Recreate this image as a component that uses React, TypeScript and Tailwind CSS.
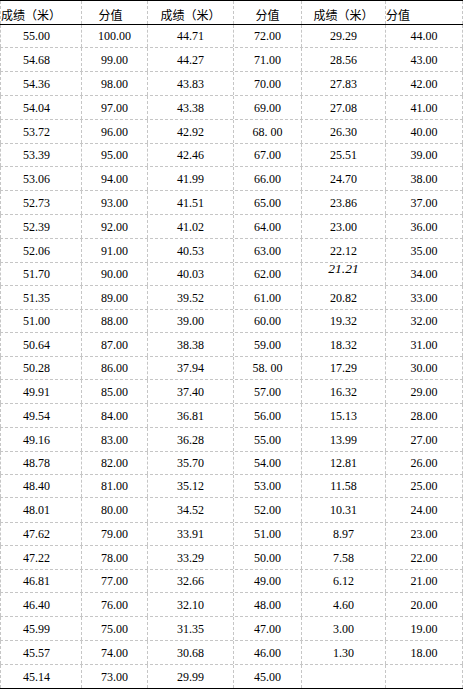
import React from "react";

const c1 = ["55.00","54.68","54.36","54.04","53.72","53.39","53.06","52.73","52.39","52.06","51.70","51.35","51.00","50.64","50.28","49.91","49.54","49.16","48.78","48.40","48.01","47.62","47.22","46.81","46.40","45.99","45.57","45.14"];
const c2 = Array.from({ length: 28 }, (_, i) => (100 - i).toFixed(2));
const c3 = ["44.71","44.27","43.83","43.38","42.92","42.46","41.99","41.51","41.02","40.53","40.03","39.52","39.00","38.38","37.94","37.40","36.81","36.28","35.70","35.12","34.52","33.91","33.29","32.66","32.10","31.35","30.68","29.99"];
const c4 = Array.from({ length: 28 }, (_, i) => {
  const v = 72 - i;
  if (v === 68) return "68. 00";
  if (v === 58) return "58. 00";
  return v.toFixed(2);
});
const c5 = ["29.29","28.56","27.83","27.08","26.30","25.51","24.70","23.86","23.00","22.12","21.21","20.82","19.32","18.32","17.29","16.32","15.13","13.99","12.81","11.58","10.31","8.97","7.58","6.12","4.60","3.00","1.30",""];
const c6 = Array.from({ length: 28 }, (_, i) => (i < 27 ? (44 - i).toFixed(2) : ""));

const heights = [23,24,24,24,24,23,24,24,24,24,23,24,23,24,23,24,24,24,23,23,25,23,24,23,24,24,24,24];

const hClass = (h: number) =>
  h === 23 ? "h-[23px]" : h === 25 ? "h-[25px]" : "h-[24px]";

const widths = ["w-[81px]", "w-[66px]", "w-[86px]", "w-[68px]", "w-[84px]", "w-[78px]"];

const serif = { fontFamily: '"Liberation Serif", "Times New Roman", serif' };

function Cell({ idx, children, last }: { idx: number; children?: React.ReactNode; last?: boolean }) {
  return (
    <div
      className={`${widths[idx]} flex items-center justify-center border-l border-dashed border-[#c6c6c6] ${idx === 5 ? "border-r" : ""} ${idx === 0 ? "pr-[9px]" : ""} ${last ? "" : ""}`}
    >
      {children}
    </div>
  );
}

export default function App() {
  const cols = [c1, c2, c3, c4, c5, c6];
  return (
    <div className="w-[466px] h-[689px] bg-white overflow-hidden">
      <div className="w-[463px] text-[12px] text-black" style={serif}>
        {/* header */}
        <div
          className="flex h-[25px] border-t border-b border-black"
          style={{ fontFamily: '"Noto Sans CJK SC", "Noto Sans", sans-serif' }}
        >
          <div className="w-[81px] flex items-end border-l border-dashed border-[#c6c6c6] pb-[1px] leading-[16px]">成绩（米）</div>
          <div className="w-[66px] flex items-end justify-center border-l border-dashed border-[#c6c6c6] pb-[1px] leading-[16px] pr-[8px]">分值</div>
          <div className="w-[86px] flex items-end justify-center border-l border-dashed border-[#c6c6c6] pb-[1px] leading-[16px]">成绩（米）</div>
          <div className="w-[68px] flex items-end justify-center border-l border-dashed border-[#c6c6c6] pb-[1px] leading-[16px]">分值</div>
          <div className="w-[84px] flex items-end justify-center border-l border-dashed border-[#c6c6c6] pb-[1px] leading-[16px]">成绩（米）</div>
          <div className="w-[78px] flex items-end border-l border-r border-dashed border-[#c6c6c6] pb-[1px] leading-[16px]">分值</div>
        </div>
        {heights.map((h, r) => {
          const last = r === heights.length - 1;
          return (
            <div
              key={r}
              className={`flex ${hClass(h)} border-b ${last ? "border-solid border-black" : "border-dashed border-[#c6c6c6]"}`}
            >
              {cols.map((col, ci) => {
                const v = col[r];
                const italic = v === "21.21";
                return (
                  <Cell key={ci} idx={ci} last={last}>
                    {italic ? (
                      <span className="italic text-[13.5px] -translate-y-[5px] inline-block">{v}</span>
                    ) : (
                      <span className="leading-[14px]">{v}</span>
                    )}
                  </Cell>
                );
              })}
            </div>
          );
        })}
      </div>
    </div>
  );
}
